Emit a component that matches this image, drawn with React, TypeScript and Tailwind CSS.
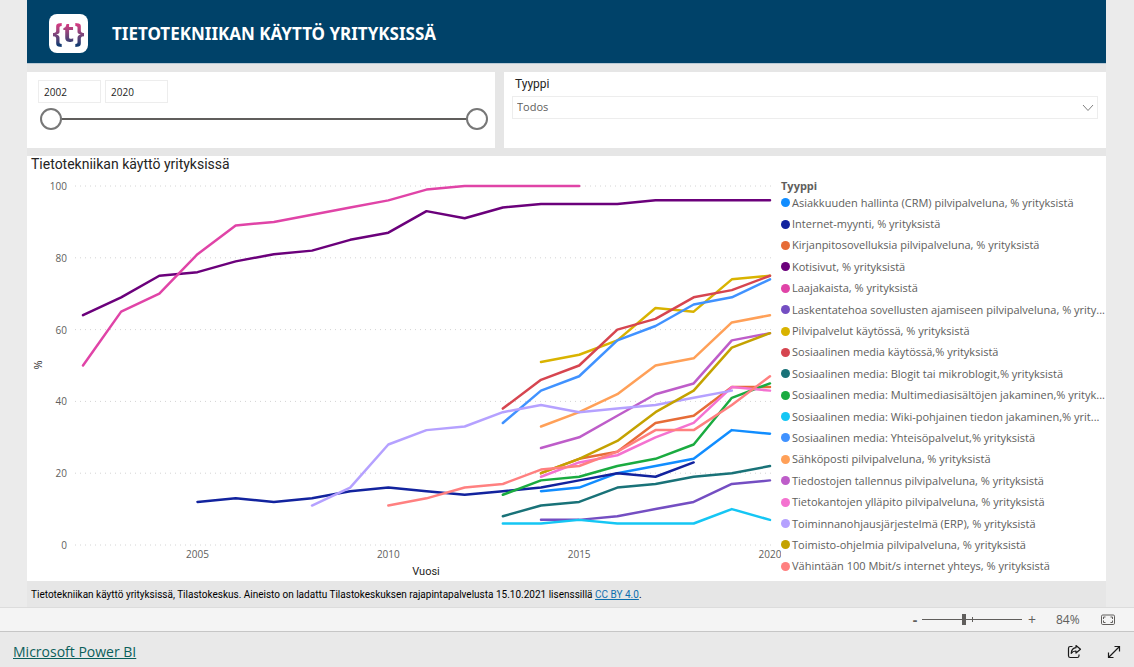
import { useState } from "react";

type Series = {
  name: string;
  color: string;
  start: number;
  values: number[];
};

const series: Series[] = [
  { name: "Asiakkuuden hallinta (CRM) pilvipalveluna, % yrityksistä", color: "#118dff", start: 2014, values: [15, 16, 20, 22, 24, 32, 31] },
  { name: "Internet-myynti, % yrityksistä", color: "#12239e", start: 2005, values: [12, 13, 12, 13, 15, 16, 15, 14, 15, 16, 18, 20, 19, 23] },
  { name: "Kirjanpitosovelluksia pilvipalveluna, % yrityksistä", color: "#e66c37", start: 2014, values: [20, 24, 26, 34, 36, 44, 44] },
  { name: "Kotisivut, % yrityksistä", color: "#6b007b", start: 2002, values: [64, 69, 75, 76, 79, 81, 82, 85, 87, 93, 91, 94, 95, 95, 95, 96, 96, 96, 96] },
  { name: "Laajakaista, % yrityksistä", color: "#e044a7", start: 2002, values: [50, 65, 70, 81, 89, 90, 92, 94, 96, 99, 100, 100, 100, 100] },
  { name: "Laskentatehoa sovellusten ajamiseen pilvipalveluna, % yrity...", color: "#744ec2", start: 2014, values: [7, 7, 8, 10, 12, 17, 18] },
  { name: "Pilvipalvelut käytössä, % yrityksistä", color: "#d9b300", start: 2014, values: [51, 53, 57, 66, 65, 74, 75] },
  { name: "Sosiaalinen media käytössä,% yrityksistä", color: "#d64550", start: 2013, values: [38, 46, 50, 60, 63, 69, 71, 75] },
  { name: "Sosiaalinen media: Blogit tai mikroblogit,% yrityksistä", color: "#197278", start: 2013, values: [8, 11, 12, 16, 17, 19, 20, 22] },
  { name: "Sosiaalinen media: Multimediasisältöjen jakaminen,% yrityk...", color: "#1aab40", start: 2013, values: [14, 18, 19, 22, 24, 28, 41, 45] },
  { name: "Sosiaalinen media: Wiki-pohjainen tiedon jakaminen,% yrit...", color: "#15c6f4", start: 2013, values: [6, 6, 7, 6, 6, 6, 10, 7] },
  { name: "Sosiaalinen media: Yhteisöpalvelut,% yrityksistä", color: "#4092ff", start: 2013, values: [34, 43, 47, 57, 61, 67, 69, 74] },
  { name: "Sähköposti pilvipalveluna, % yrityksistä", color: "#ffa058", start: 2014, values: [33, 37, 42, 50, 52, 62, 64] },
  { name: "Tiedostojen tallennus pilvipalveluna, % yrityksistä", color: "#be5dc9", start: 2014, values: [27, 30, 36, 42, 45, 57, 59] },
  { name: "Tietokantojen ylläpito pilvipalveluna, % yrityksistä", color: "#f472d0", start: 2014, values: [19, 23, 25, 30, 34, 44, 43] },
  { name: "Toiminnanohjausjärjestelmä (ERP), % yrityksistä", color: "#b5a1ff", start: 2008, values: [11, 16, 28, 32, 33, 37, 39, 37, 38, 39, 41, 43] },
  { name: "Toimisto-ohjelmia pilvipalveluna, % yrityksistä", color: "#c4a200", start: 2014, values: [20, 24, 29, 37, 43, 55, 59] },
  { name: "Vähintään 100 Mbit/s internet yhteys, % yrityksistä", color: "#ff8080", start: 2010, values: [11, 13, 16, 17, 21, 22, 26, 32, 32, 39, 47] },
];

const yTicks = [0, 20, 40, 60, 80, 100];
const xTicks = [2005, 2010, 2015, 2020];

const xPos = (year: number) => 56 + ((year - 2002) * 687) / 18;
const yPos = (value: number) => 370 - value * 3.59;

const LineChart = () => (
  <svg viewBox="0 0 754 406" className="block h-auto w-full" role="img" aria-label="Tietotekniikan käyttö yrityksissä">
    {yTicks.map((t) => (
      <g key={t}>
        <line x1="48" x2="748" y1={yPos(t)} y2={yPos(t)} stroke="#d4d4d4" strokeWidth="1" strokeDasharray="1 4" />
        <text x="40" y={yPos(t) + 4} textAnchor="end" fontSize="10" fill="#605e5c">
          {t}
        </text>
      </g>
    ))}
    {xTicks.map((t) => (
      <text key={t} x={xPos(t)} y="383" textAnchor="middle" fontSize="10" fill="#605e5c">
        {t}
      </text>
    ))}
    <text x="399" y="400" textAnchor="middle" fontSize="11" fill="#252423" className="font-[Roboto,sans-serif]">
      Vuosi
    </text>
    <text transform="translate(15 190) rotate(-90)" textAnchor="middle" fontSize="11" fill="#252423">
      %
    </text>
    {series.map((s) => (
      <polyline
        key={s.name}
        points={s.values.map((v, i) => `${xPos(s.start + i)},${yPos(v)}`).join(" ")}
        fill="none"
        stroke={s.color}
        strokeWidth="2.5"
        strokeLinejoin="round"
        strokeLinecap="round"
      />
    ))}
  </svg>
);

const Legend = () => (
  <div className="flex w-[325px] shrink-0 flex-col pb-1 text-[#605e5c]">
    <h3 className="h-[17px] text-[11px] leading-[22px] font-bold">Tyyppi</h3>
    <ul className="flex flex-1 flex-col">
      {series.map((s) => (
        <li key={s.name} className="flex flex-1 items-center gap-[2px] text-[11px] leading-4 whitespace-nowrap">
          <span className="size-[9px] shrink-0 rounded-full" style={{ backgroundColor: s.color }} />
          {s.name}
        </li>
      ))}
    </ul>
  </div>
);

const thumb =
  "pointer-events-none col-start-1 row-start-1 h-6 w-full appearance-none bg-transparent [&::-webkit-slider-thumb]:pointer-events-auto [&::-webkit-slider-thumb]:size-[22px] [&::-webkit-slider-thumb]:appearance-none [&::-webkit-slider-thumb]:rounded-full [&::-webkit-slider-thumb]:border-2 [&::-webkit-slider-thumb]:border-[#777] [&::-webkit-slider-thumb]:bg-white";

const YearSlicer = () => {
  const [from, setFrom] = useState(2002);
  const [to, setTo] = useState(2020);

  return (
    <section className="flex h-[76px] w-[468px] shrink-0 flex-col bg-white pt-2 pr-[7px] pl-[11px]">
      <div className="flex gap-1">
        <input
          aria-label="Alkuvuosi"
          className="h-[23px] w-[63px] border border-[#ededed] px-[5px] text-[10px] text-[#252423]"
          value={from}
          onChange={(e) => setFrom(Number(e.target.value))}
        />
        <input
          aria-label="Loppuvuosi"
          className="h-[23px] w-[63px] border border-[#ededed] px-[5px] text-[10px] text-[#252423]"
          value={to}
          onChange={(e) => setTo(Number(e.target.value))}
        />
      </div>
      <div className="mt-1 ml-[2px] grid items-center">
        <div className="col-start-1 row-start-1 mx-3 h-[2px] bg-[#605e5c]" />
        <input
          type="range"
          aria-label="Ensimmäinen vuosi"
          min={2002}
          max={2020}
          value={from}
          onChange={(e) => setFrom(Number(e.target.value))}
          className={thumb}
        />
        <input
          type="range"
          aria-label="Viimeinen vuosi"
          min={2002}
          max={2020}
          value={to}
          onChange={(e) => setTo(Number(e.target.value))}
          className={thumb}
        />
      </div>
    </section>
  );
};

const TypeSlicer = () => (
  <section className="h-[76px] flex-1 bg-white px-2 pt-1">
    <label htmlFor="type" className="block pl-[3px] font-[Roboto,sans-serif] text-[12px] leading-4 text-[#252423]">
      Tyyppi
    </label>
    <div className="mt-1 grid items-center">
      <select
        id="type"
        className="col-start-1 row-start-1 h-[23px] w-full appearance-none border border-[#ededed] px-1 text-[11px] text-[#605e5c]"
      >
        <option>Todos</option>
      </select>
      <svg viewBox="0 0 12 8" className="pointer-events-none col-start-1 row-start-1 mr-1 h-2 w-3 justify-self-end" fill="none" stroke="#808080">
        <path d="M1 1 6 6.5 11 1" />
      </svg>
    </div>
  </section>
);

const StatusBar = () => {
  const [zoom, setZoom] = useState(84);

  return (
    <div className="flex h-6 items-center justify-end border-t border-[#dcdcdc] bg-[#f4f4f4] pr-[18px] text-[#605e5c]">
      <button aria-label="Loitonna" className="w-[14px] text-center text-sm leading-5 font-bold" onClick={() => setZoom(zoom - 1)}>
        -
      </button>
      <div className="grid w-[100px] items-center">
        <div className="col-start-1 row-start-1 h-px bg-[#605e5c]" />
        <div className="col-start-1 row-start-1 h-[5px] w-px justify-self-center bg-[#605e5c]" />
        <input
          type="range"
          aria-label="Zoomaus"
          min={0}
          max={200}
          value={zoom}
          onChange={(e) => setZoom(Number(e.target.value))}
          className="col-start-1 row-start-1 h-4 w-full appearance-none bg-transparent [&::-webkit-slider-thumb]:h-[11px] [&::-webkit-slider-thumb]:w-1 [&::-webkit-slider-thumb]:appearance-none [&::-webkit-slider-thumb]:bg-[#605e5c]"
        />
      </div>
      <button aria-label="Lähennä" className="w-5 text-center text-sm leading-5" onClick={() => setZoom(zoom + 1)}>
        +
      </button>
      <span className="ml-[14px] w-8 text-xs leading-5">{zoom}%</span>
      <button aria-label="Sovita sivulle" className="ml-3">
        <svg viewBox="0 0 16 12" className="block h-3 w-4" fill="none" stroke="#605e5c">
          <rect x="1.5" y="1" width="13" height="9.5" rx="1.2" />
          <path d="M3.5 5V3H5.5M10.5 3H12.5V5M12.5 6.5V8.5H10.5M5.5 8.5H3.5V6.5" />
        </svg>
      </button>
    </div>
  );
};

export default function App() {
  return (
    <div className="min-h-screen bg-[#ebebeb] font-['Open_Sans','Noto_Sans',sans-serif]">
      <main className="mr-7 ml-[27px] bg-[#e6e6e6]">
        <header className="flex h-16 items-center border-b border-[#b9c9d4] bg-[#004269] pl-[22px]">
          <div className="mt-1 flex size-[39px] items-center justify-center rounded-lg bg-white">
            <span className="bg-linear-to-b from-[#d03a80] from-25% to-[#123a70] to-80% bg-clip-text pb-1 text-[26px] leading-8 font-bold text-transparent">
              {"{t}"}
            </span>
          </div>
          <h1 className="mt-1 ml-6 font-['Noto_Sans',sans-serif] text-[17px] leading-6 font-bold text-white">
            TIETOTEKNIIKAN KÄYTTÖ YRITYKSISSÄ
          </h1>
        </header>

        <div className="mt-2 flex gap-[9px]">
          <YearSlicer />
          <TypeSlicer />
        </div>

        {/* Chart */}
        <section className="mt-2 bg-white">
          <h2 className="h-[19px] pl-1 font-[Roboto,sans-serif] text-[14px] leading-4 text-[#252423]">
            Tietotekniikan käyttö yrityksissä
          </h2>
          <div className="flex">
            <div className="min-w-0 flex-1">
              <LineChart />
            </div>
            <Legend />
          </div>
        </section>

        <p className="h-[26px] pl-1 font-[Roboto,sans-serif] text-[10px] leading-7 text-black">
          Tietotekniikan käyttö yrityksissä, Tilastokeskus. Aineisto on ladattu Tilastokeskuksen rajapintapalvelusta 15.10.2021 lisenssillä{" "}
          <a href="#license" className="text-[#0e6fae] underline">
            CC BY 4.0
          </a>
          .
        </p>
      </main>

      <StatusBar />

      <footer className="flex h-9 items-center justify-between border-t border-[#c6c6c6] bg-[#e9e9e9] pt-1 pr-3 pl-[13px]">
        <a href="#powerbi" className="text-sm leading-5 text-[#0b5f5b] underline">
          Microsoft Power BI
        </a>
        <div className="flex items-center gap-6">
          <button aria-label="Jaa">
            <svg viewBox="0 0 16 16" className="block size-4" fill="none" stroke="#1a1a1a" strokeWidth="1.2" strokeLinejoin="round">
              <path d="M6.5 2.5H4.300Q2.500 2.500 2.500 4.300V11.700Q2.500 13.500 4.300 13.500H11.200Q13 13.500 13 11.700V10.500" />
              <path d="M10 1.500 14.500 5.200 10 9V7Q7 6.800 5.200 9.300 5.700 4 10 3.700Z" />
            </svg>
          </button>
          <button aria-label="Koko näyttö">
            <svg viewBox="0 0 16 16" className="block size-4" fill="none" stroke="#1a1a1a" strokeWidth="1.2">
              <path d="M2.500 13.500 13.500 2.500M8.500 2.500H13.500V7.500M2.500 8.500V13.500H7.500" />
            </svg>
          </button>
        </div>
      </footer>
    </div>
  );
}
